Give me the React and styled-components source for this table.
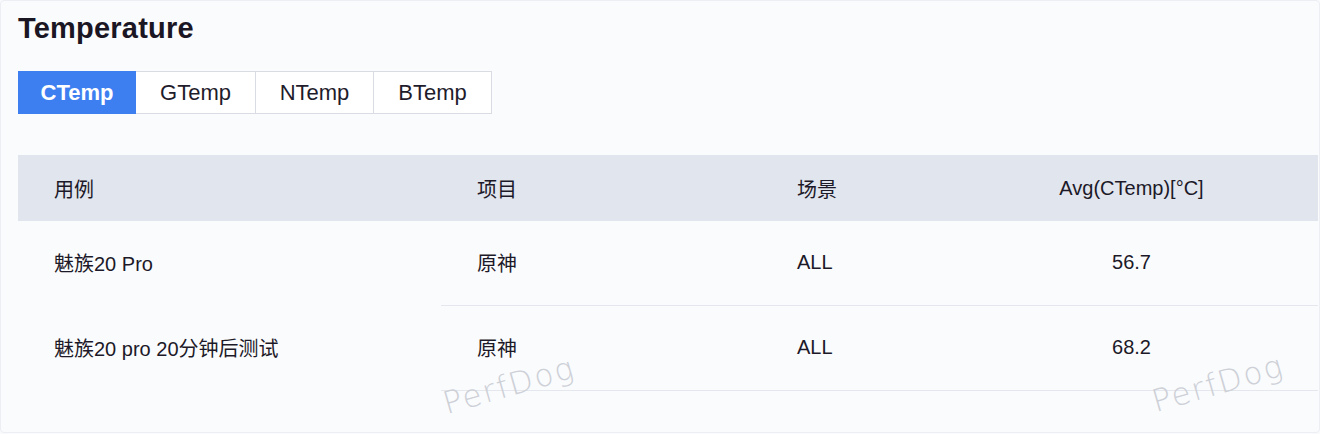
import React, { useState } from "react";
import styled, { createGlobalStyle } from "styled-components";

const GlobalStyle = createGlobalStyle`
  html, body {
    margin: 0;
    padding: 0;
    background: #f9fafc;
    overflow: hidden;
  }
  body {
    font-family: "Liberation Sans", Arial, "Noto Sans CJK SC", sans-serif;
  }
`;

const Card = styled.div`
  position: relative;
  box-sizing: border-box;
  width: 1320px;
  height: 433px;
  margin: 0;
  padding: 10px 1px 0 17px;
  background: #fafbfd;
  border: 1px solid #eceef3;
  border-radius: 4px;
  overflow: hidden;
`;

const Title = styled.h2`
  margin: 0;
  font-size: 29px;
  line-height: 35px;
  font-weight: 700;
  color: #1a1624;
  letter-spacing: 0.2px;
`;

const Tabs = styled.div`
  display: flex;
  margin-top: 25px;
  width: max-content;
`;

const Tab = styled.button`
  box-sizing: border-box;
  width: ${(p) => p.$w}px;
  height: 43px;
  margin-left: -1px;
  border: 1px solid ${(p) => (p.$active ? "#3d7ef1" : "#d9dce3")};
  background: ${(p) => (p.$active ? "#3d7ef1" : "#ffffff")};
  color: ${(p) => (p.$active ? "#ffffff" : "#1f1c2b")};
  font-family: "Liberation Sans", Arial, sans-serif;
  font-size: 22px;
  font-weight: ${(p) => (p.$active ? 700 : 400)};
  padding: 0;
  cursor: pointer;
  position: relative;
  z-index: ${(p) => (p.$active ? 1 : 0)};

  &:first-child {
    margin-left: 0;
  }
`;

const Table = styled.div`
  margin-top: 41px;
  display: grid;
  grid-template-columns: 423px 320px 184px 1fr;
  color: #1c1928;
  font-size: 20px;
`;

const HeadCell = styled.div`
  height: 66px;
  display: flex;
  align-items: center;
  justify-content: ${(p) => (p.$center ? "center" : "flex-start")};
  padding-left: ${(p) => (p.$center ? 0 : 36)}px;
  background: #e1e5ee;
`;

const Cell = styled.div`
  height: 85px;
  box-sizing: border-box;
  display: flex;
  align-items: center;
  justify-content: ${(p) => (p.$center ? "center" : "flex-start")};
  padding-left: ${(p) => (p.$center ? 0 : 36)}px;
  padding-bottom: 2px;
  border-bottom: 1px solid ${(p) => (p.$line ? "#e4e7ed" : "transparent")};
`;

const Watermark = styled.span`
  position: absolute;
  left: ${(p) => p.$x}px;
  top: ${(p) => p.$y}px;
  font-family: "DejaVu Sans", sans-serif;
  font-size: 31px;
  font-weight: 200;
  letter-spacing: 2px;
  color: #cdd0d7;
  transform: rotate(-16deg);
  transform-origin: center;
  pointer-events: none;
`;

const tabs = [
  { name: "CTemp", w: 118 },
  { name: "GTemp", w: 121 },
  { name: "NTemp", w: 119 },
  { name: "BTemp", w: 119 },
];

const rows = [
  { name: "魅族20 Pro", project: "原神", scene: "ALL", avg: "56.7" },
  { name: "魅族20 pro 20分钟后测试", project: "原神", scene: "ALL", avg: "68.2" },
];

export default function App() {
  const [active, setActive] = useState("CTemp");

  return (
    <>
      <GlobalStyle />
      <Card>
        <Title>Temperature</Title>
        <Tabs>
          {tabs.map((t) => (
            <Tab
              key={t.name}
              $w={t.w}
              $active={active === t.name}
              onClick={() => setActive(t.name)}
            >
              {t.name}
            </Tab>
          ))}
        </Tabs>

        <Table>
          <HeadCell>用例</HeadCell>
          <HeadCell>项目</HeadCell>
          <HeadCell>场景</HeadCell>
          <HeadCell $center>Avg({active})[°C]</HeadCell>
          {rows.map((r) => (
            <React.Fragment key={r.name}>
              <Cell>{r.name}</Cell>
              <Cell $line>{r.project}</Cell>
              <Cell $line>{r.scene}</Cell>
              <Cell $line $center>{r.avg}</Cell>
            </React.Fragment>
          ))}
        </Table>

        <Watermark $x={440} $y={366}>PerfDog</Watermark>
        <Watermark $x={1149} $y={364}>PerfDog</Watermark>
      </Card>
    </>
  );
}
